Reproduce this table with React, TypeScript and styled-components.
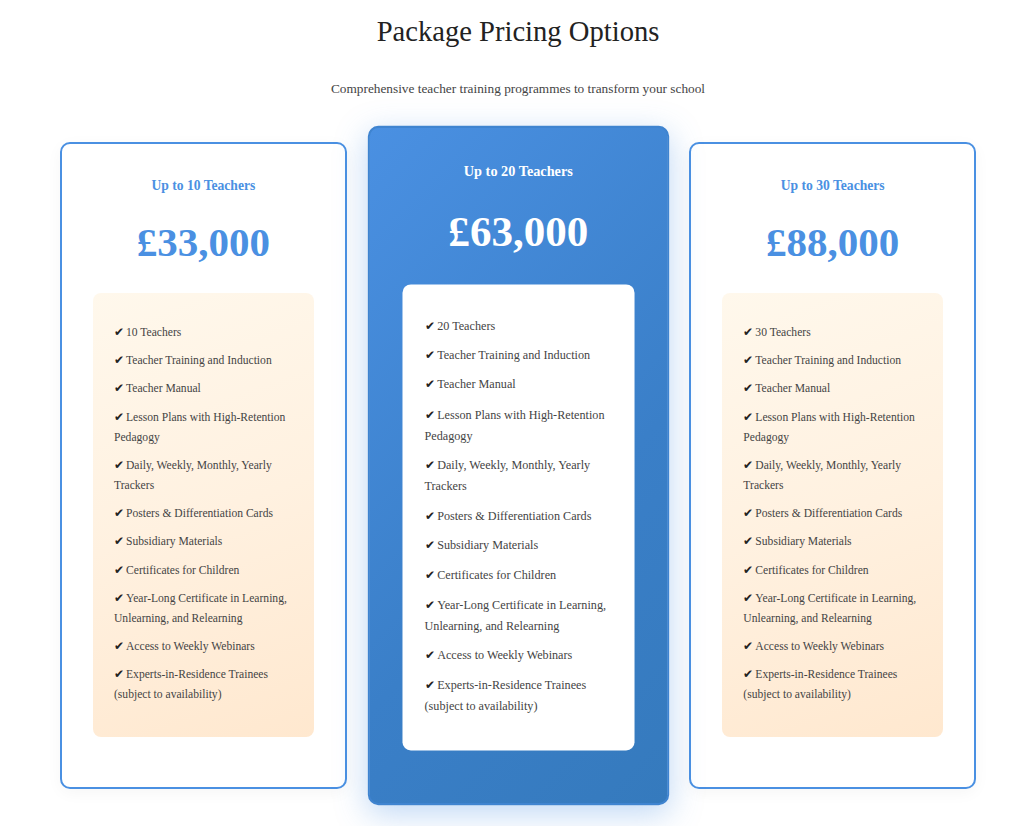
import styled, { createGlobalStyle, css } from 'styled-components';

const GlobalStyle = createGlobalStyle`
  html, body {
    margin: 0;
    padding: 0;
    background: #ffffff;
  }
  body {
    font-family: "Liberation Serif", "Times New Roman", serif;
    color: #333;
  }
`;

type Plan = {
  title: string;
  price: string;
  count: number;
  featured?: boolean;
};

const features = (n: number) => [
  `${n} Teachers`,
  'Teacher Training and Induction',
  'Teacher Manual',
  'Lesson Plans with High-Retention Pedagogy',
  'Daily, Weekly, Monthly, Yearly Trackers',
  'Posters & Differentiation Cards',
  'Subsidiary Materials',
  'Certificates for Children',
  'Year-Long Certificate in Learning, Unlearning, and Relearning',
  'Access to Weekly Webinars',
  'Experts-in-Residence Trainees (subject to availability)',
];

const plans: Plan[] = [
  { title: 'Up to 10 Teachers', price: '£33,000', count: 10 },
  { title: 'Up to 20 Teachers', price: '£63,000', count: 20, featured: true },
  { title: 'Up to 30 Teachers', price: '£88,000', count: 30 },
];

export default function App() {
  return (
    <>
      <GlobalStyle />
      <Page>
        <Header>
          <Heading>Package Pricing Options</Heading>
          <Subtitle>Comprehensive teacher training programmes to transform your school</Subtitle>
        </Header>
        <Cards>
          {plans.map((p) => (
            <Card key={p.title} $featured={p.featured}>
              <PlanTitle $featured={p.featured}>{p.title}</PlanTitle>
              <Price $featured={p.featured}>{p.price}</Price>
              <FeatureBox $featured={p.featured}>
                <FeatureList>
                  {features(p.count).map((f) => (
                    <Feature key={f}>
                      <Check>✔</Check>
                      {f}
                    </Feature>
                  ))}
                </FeatureList>
              </FeatureBox>
            </Card>
          ))}
        </Cards>
      </Page>
    </>
  );
}

const Page = styled.div`
  width: 1023px;
  min-height: 826px;
  box-sizing: border-box;
  padding: 0 47px 0 60px;
`;

const Header = styled.header`
  text-align: center;
  padding-top: 14px;
`;

const Heading = styled.h1`
  margin: 0;
  font-size: 28.6px;
  line-height: 36px;
  font-weight: 400;
  color: #222;
`;

const Subtitle = styled.p`
  margin: 29px 0 0;
  font-size: 13.3px;
  line-height: 20px;
  color: #444;
`;

const Cards = styled.div`
  display: flex;
  gap: 28px;
  margin-top: 43px;
  align-items: stretch;
`;

const Card = styled.div<{ $featured?: boolean }>`
  flex: 1;
  box-sizing: border-box;
  height: 647px;
  border: 2px solid #4a90e2;
  border-radius: 10px;
  padding: 31px 31px 0;
  background: #fff;
  box-shadow: 0 4px 16px rgba(0, 0, 0, 0.04);
  text-align: center;
  ${({ $featured }) =>
    $featured &&
    css`
      background: linear-gradient(135deg, #4a90e2 0%, #3a7fc8 60%, #357abd 100%);
      border-color: #3f84d0;
      transform: scale(1.05);
      box-shadow: 0 8px 30px rgba(74, 144, 226, 0.35);
    `}
`;

const PlanTitle = styled.h3<{ $featured?: boolean }>`
  margin: 0;
  padding-top: 1px;
  font-size: 13.6px;
  line-height: 20px;
  font-weight: 700;
  color: ${({ $featured }) => ($featured ? '#fff' : '#4a90e2')};
`;

const Price = styled.div<{ $featured?: boolean }>`
  margin-top: 22px;
  font-size: 41px;
  line-height: 48px;
  font-weight: 700;
  color: ${({ $featured }) => ($featured ? '#fff' : '#4a90e2')};
`;

const FeatureBox = styled.div<{ $featured?: boolean }>`
  margin-top: 27px;
  border-radius: 8px;
  padding: 26px 21px 28px;
  text-align: left;
  background: ${({ $featured }) =>
    $featured ? '#fff' : 'linear-gradient(160deg, #fff8ec 0%, #fff1e0 50%, #ffe8cf 100%)'};
`;

const FeatureList = styled.ul`
  list-style: none;
  margin: 0;
  padding: 0;
`;

const Feature = styled.li`
  padding: 4.05px 0;
  font-size: 11.6px;
  line-height: 20.1px;
  color: #444;
`;

const Check = styled.span`
  display: inline-block;
  color: #222;
  font-size: 11.5px;
  line-height: 1;
  margin-right: 2px;
`;
